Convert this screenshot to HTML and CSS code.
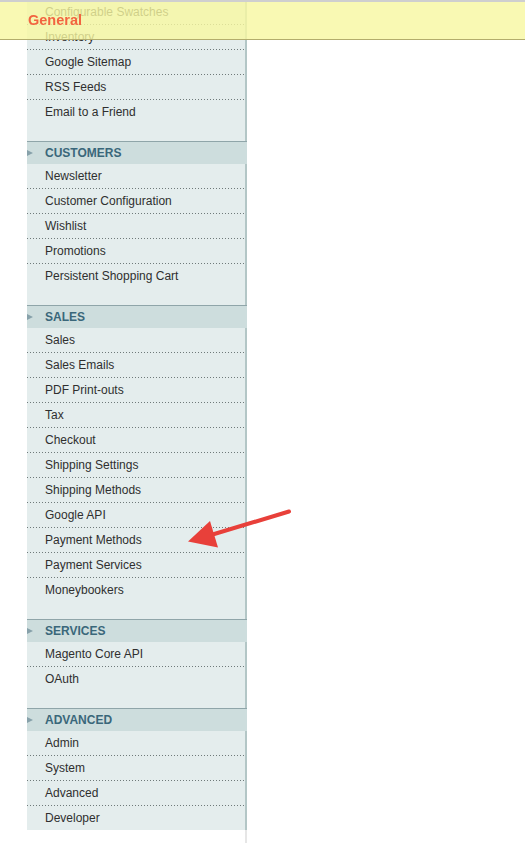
FILE: index.html
```html
<!DOCTYPE html>
<html>
<head>
<meta charset="utf-8">
<link rel="stylesheet" href="styles.css">
</head>
<body>
<div class="page">
  <aside class="sidebar">
    <ul class="tabs">
      <li>Configurable Swatches</li>
      <li>Inventory</li>
      <li>Google Sitemap</li>
      <li>RSS Feeds</li>
      <li>Email to a Friend</li>
    </ul>
    <div class="sec-head"><span class="tri"></span>Customers</div>
    <ul class="tabs">
      <li>Newsletter</li>
      <li>Customer Configuration</li>
      <li>Wishlist</li>
      <li>Promotions</li>
      <li>Persistent Shopping Cart</li>
    </ul>
    <div class="sec-head"><span class="tri"></span>Sales</div>
    <ul class="tabs">
      <li>Sales</li>
      <li>Sales Emails</li>
      <li>PDF Print-outs</li>
      <li>Tax</li>
      <li>Checkout</li>
      <li>Shipping Settings</li>
      <li>Shipping Methods</li>
      <li>Google API</li>
      <li>Payment Methods</li>
      <li>Payment Services</li>
      <li>Moneybookers</li>
    </ul>
    <div class="sec-head"><span class="tri"></span>Services</div>
    <ul class="tabs">
      <li>Magento Core API</li>
      <li>OAuth</li>
    </ul>
    <div class="sec-head"><span class="tri"></span>Advanced</div>
    <ul class="tabs last">
      <li>Admin</li>
      <li>System</li>
      <li>Advanced</li>
      <li>Developer</li>
    </ul>
  </aside>
</div>
<header class="bar"><h3>General</h3></header>
<svg class="arrow" width="525" height="843" viewBox="0 0 525 843">
  <line x1="289" y1="511.5" x2="206" y2="536.5" stroke="#e8403a" stroke-width="4" stroke-linecap="round"/>
  <polygon points="188,541.5 210,521 218,547.5" fill="#e8403a"/>
</svg>
</body>
</html>
```
FILE: styles.css
```css
html, body {
  margin: 0;
  padding: 0;
  background: #ffffff;
}
body {
  font-family: "Liberation Sans", Arial, sans-serif;
  font-size: 12px;
  color: #2f2f2f;
  height: 843px;
  overflow: hidden;
}
.page {
  padding-left: 27px;
  height: 843px;
}
.sidebar {
  width: 220px;
  height: 843px;
  box-sizing: border-box;
  background: linear-gradient(to right, transparent 218px, #e6e6e6 218px);
}
.tabs {
  list-style: none;
  margin: 0;
  padding: 0 0 17px 0;
  background: #e4eded;
  border-right: 2px solid #b3c6c6;
}
.tabs.last {
  padding-bottom: 0;
}
.tabs li {
  height: 24px;
  line-height: 24px;
  padding-left: 18px;
  white-space: nowrap;
  background-image: linear-gradient(to right, #6f7a7a 1px, transparent 1px);
  background-size: 3px 1px;
  background-repeat: repeat-x;
  background-position: 0 100%;
  padding-bottom: 1px;
}
.tabs li:last-child {
  background-image: none;
  padding-bottom: 0;
}
.sec-head {
  height: 22px;
  line-height: 22px;
  border-top: 1px solid #8fa5a9;
  background: #cddddd;
  color: #3a677a;
  font-weight: bold;
  text-transform: uppercase;
  display: flex;
  align-items: center;
}
.tri {
  width: 0;
  height: 0;
  border-top: 3.5px solid transparent;
  border-bottom: 3.5px solid transparent;
  border-left: 6px solid #87a1aa;
  margin-right: 12px;
  margin-top: -1px;
}
.bar {
  position: fixed;
  top: 0;
  left: 0;
  width: 525px;
  height: 37px;
  box-sizing: content-box;
  border-top: 2px solid #cfcfcf;
  border-bottom: 1px solid #b3ad6c;
  background: rgba(248, 248, 160, 0.8);
}
.bar h3 {
  margin: 0;
  padding-left: 28px;
  line-height: 37px;
  font-size: 14.5px;
  font-weight: bold;
  color: #f26440;
}
.arrow {
  position: absolute;
  top: 0;
  left: 0;
  pointer-events: none;
}
```
